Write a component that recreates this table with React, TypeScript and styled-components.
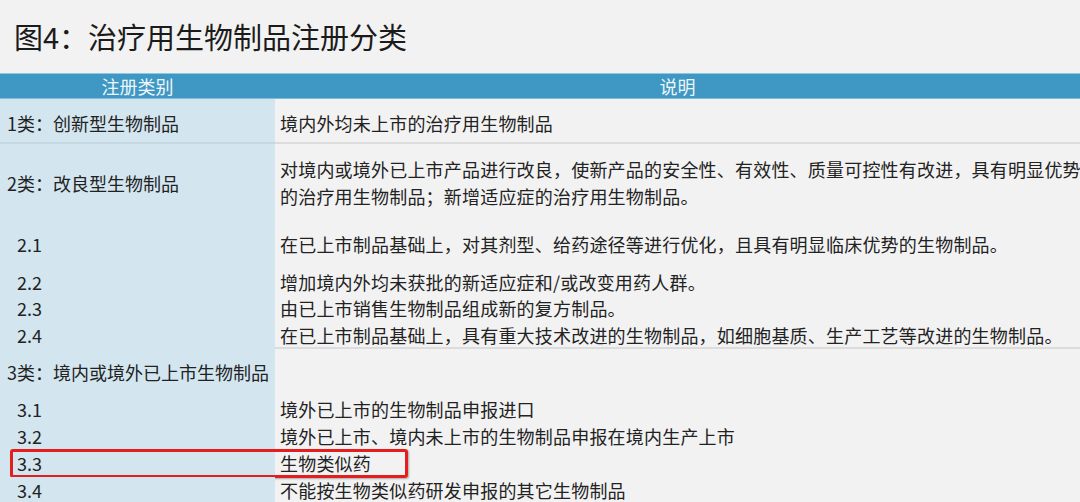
import React from "react";
import styled, { createGlobalStyle } from "styled-components";

const Global = createGlobalStyle`
  html, body { margin: 0; padding: 0; background: #f2f2f2; overflow: hidden; }
  body { font-family: "Noto Sans CJK SC", "Noto Sans", sans-serif; color: #222; }
`;

const Page = styled.div`
  width: 1080px;
  height: 502px;
  background: #f2f2f2;
  overflow: hidden;
`;

const Title = styled.h1`
  margin: 0;
  height: 73px;
  line-height: 72px;
  padding-left: 14px;
  font-size: 29px;
  font-weight: 400;
  color: #1b1b1b;
  white-space: nowrap;
`;

const Header = styled.div`
  display: grid;
  grid-template-columns: 275px 1fr;
  height: 24px;
  background: #3f98c3;
  border-top: 1px solid #8fc6e0;
  border-bottom: 1px solid #7fbcd9;
`;

const HeaderCell = styled.div`
  text-align: center;
  color: #eef6fa;
  font-size: 18px;
  line-height: 26px;
  margin-top: -1px;
`;

const Row = styled.div<{ $h: number }>`
  position: relative;
  display: grid;
  grid-template-columns: 275px 1fr;
  height: ${(p) => p.$h}px;
`;

const LeftCell = styled.div<{ $pt: number; $indent: number; $lh: number }>`
  background: #d3e6f0;
  padding-top: ${(p) => p.$pt}px;
  padding-left: ${(p) => p.$indent}px;
  font-size: 18px;
  line-height: ${(p) => p.$lh}px;
  white-space: nowrap;
`;

const RightCell = styled.div<{ $pt: number }>`
  padding-top: ${(p) => p.$pt}px;
  padding-left: 5px;
  font-size: 18px;
  letter-spacing: 0.2px;
  line-height: 27px;
  white-space: nowrap;
`;

const Divider = styled.div`
  display: grid;
  grid-template-columns: 275px 1fr;
  height: 2px;
`;

const DividerLeft = styled.div`
  background: #c6d9e3;
`;

const DividerRight = styled.div`
  background: #dcdcdc;
`;

const Highlight = styled.div`
  position: absolute;
  left: 10px;
  top: -1px;
  width: 398px;
  height: 29px;
  box-sizing: border-box;
  border: 3px solid #e41e1e;
  border-radius: 3px;
  box-shadow: 1px 1px 2px rgba(0, 0, 0, 0.3);
  pointer-events: none;
`;

type RowData = {
  left: string;
  right: React.ReactNode;
  h: number;
  pt?: number;
  indent?: number;
  leftLh?: number;
  highlight?: boolean;
  divider?: boolean;
};

const rows: RowData[] = [
  { left: "1类：创新型生物制品", right: "境内外均未上市的治疗用生物制品", h: 43, pt: 11, indent: 7 },
  { divider: true, left: "", right: "", h: 2 },
  {
    left: "2类：改良型生物制品",
    right: (
      <>
        对境内或境外已上市产品进行改良，使新产品的安全性、有效性、质量可控性有改进，具有明显优势
        <br />
        的治疗用生物制品；新增适应症的治疗用生物制品。
      </>
    ),
    h: 87,
    pt: 12,
    indent: 7,
    leftLh: 54,
  },
  { left: "2.1", right: "在已上市制品基础上，对其剂型、给药途径等进行优化，且具有明显临床优势的生物制品。", h: 38 },
  { left: "2.2", right: "增加境内外均未获批的新适应症和/或改变用药人群。", h: 26 },
  { left: "2.3", right: "由已上市销售生物制品组成新的复方制品。", h: 27 },
  { left: "2.4", right: "在已上市制品基础上，具有重大技术改进的生物制品，如细胞基质、生产工艺等改进的生物制品。", h: 25 },
  { divider: true, left: "", right: "", h: 2 },
  { left: "3类：境内或境外已上市生物制品", right: "", h: 47, pt: 10, indent: 7 },
  { left: "3.1", right: "境外已上市的生物制品申报进口", h: 27 },
  { left: "3.2", right: "境外已上市、境内未上市的生物制品申报在境内生产上市", h: 27 },
  { left: "3.3", right: "生物类似药", h: 27, highlight: true },
  { left: "3.4", right: "不能按生物类似药研发申报的其它生物制品", h: 30 },
];

export default function App() {
  return (
    <Page>
      <Global />
      <Title>图4：治疗用生物制品注册分类</Title>
      <Header>
        <HeaderCell>注册类别</HeaderCell>
        <HeaderCell>说明</HeaderCell>
      </Header>
      {rows.map((r, i) =>
        r.divider ? (
          <Divider key={i}>
            <DividerLeft />
            <DividerRight />
          </Divider>
        ) : (
          <Row key={i} $h={r.h}>
            <LeftCell $pt={r.pt ?? 0} $indent={r.indent ?? 17} $lh={r.leftLh ?? 27}>
              {r.left}
            </LeftCell>
            <RightCell $pt={r.pt ?? 0}>{r.right}</RightCell>
            {r.highlight && <Highlight />}
          </Row>
        )
      )}
    </Page>
  );
}
